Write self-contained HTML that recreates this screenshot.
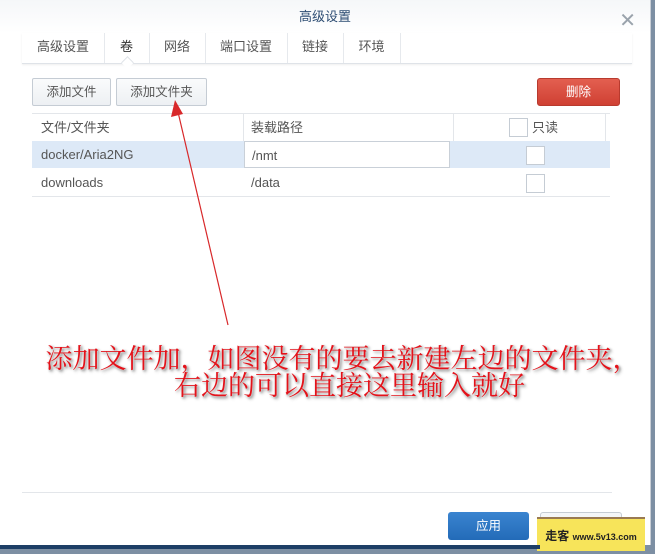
<!DOCTYPE html>
<html><head><meta charset="utf-8"><style>
body{margin:0;width:655px;height:549px;overflow:hidden;background:#7d8fa3;font-family:"Liberation Sans","Noto Sans CJK SC",sans-serif;position:relative}
.dlg{position:absolute;left:0;top:0;width:650px;height:545px;background:#fff;border-right:1px solid #c8ced6}
.title{position:absolute;left:0;top:0;width:650px;height:33px;background:linear-gradient(#f5f7f9,#fff);text-align:center;line-height:34px;font-size:13px;color:#2d4d73}
.x{position:absolute;right:14px;top:4px;font-size:20px;color:#9aa3ac;font-weight:300}
.tabs{position:absolute;left:22px;top:33px;width:610px;height:30px;border-bottom:1px solid #dfe3e8;box-shadow:0 1px 2px #eee}
.tab{position:absolute;top:0;height:30px;line-height:27px;font-size:13px;color:#555;text-align:center;border-right:1px solid #e6e9ed}
.btn{position:absolute;top:78px;height:26px;line-height:26px;border:1px solid #c5ccd4;border-radius:2px;background:linear-gradient(#fafbfc,#edf0f3);font-size:12.5px;color:#555;text-align:center}
.del{position:absolute;left:537px;top:78px;width:81px;height:26px;line-height:26px;border-radius:3px;background:linear-gradient(#e35f50,#cf4033);color:#fff;font-size:12.5px;text-align:center;border:1px solid #b83a2e}
.row{position:absolute;left:32px;width:578px;font-size:13px;color:#555}
.cb{position:absolute;width:17px;height:17px;border:1px solid #c5ccd4;background:#fff}
.ann{position:absolute;left:0;width:655px;text-align:center;font-family:"Noto Serif CJK SC",serif;font-size:27px;line-height:27px;color:#e4121a;text-shadow:0 0 2px #fff,1px 1px 2px #888,2px 2px 3px #999;white-space:nowrap}
</style></head><body>
<div class="dlg">
<div class="title">高级设置<span class="x">✕</span></div>
<div class="tabs">
<div class="tab" style="left:0;width:82px">高级设置</div>
<div class="tab" style="left:82px;width:45px;color:#333">卷</div>
<div class="tab" style="left:127px;width:56px">网络</div>
<div class="tab" style="left:183px;width:82px">端口设置</div>
<div class="tab" style="left:265px;width:56px">链接</div>
<div class="tab" style="left:321px;width:57px">环境</div>
</div>
<div style="position:absolute;left:123px;top:58px;width:8px;height:8px;background:#fff;border-left:1px solid #dfe3e8;border-top:1px solid #dfe3e8;transform:rotate(45deg)"></div>
<div class="btn" style="left:32px;width:77px">添加文件</div>
<div class="btn" style="left:116px;width:89px">添加文件夹</div>
<div class="del">删除</div>
<div class="row" style="top:113px;height:27px;line-height:27px;border-top:1px solid #e3e6ea;border-bottom:1px solid #e3e6ea">
<span style="position:absolute;left:9px">文件/文件夹</span>
<div style="position:absolute;left:211px;top:0;height:27px;border-left:1px solid #e3e6ea"></div>
<span style="position:absolute;left:219px">装载路径</span>
<div style="position:absolute;left:421px;top:0;height:27px;border-left:1px solid #e3e6ea"></div>
<div class="cb" style="left:477px;top:4px"></div><span style="position:absolute;left:500px">只读</span>
<div style="position:absolute;left:573px;top:0;height:27px;border-left:1px solid #e3e6ea"></div>
</div>
<div class="row" style="top:141px;height:27px;line-height:27px;background:#dde9f7">
<span style="position:absolute;left:9px">docker/Aria2NG</span>
<div style="position:absolute;left:212px;top:0;width:197px;height:25px;background:#fff;border:1px solid #c9d0d8;padding-left:7px">/nmt</div>
<div class="cb" style="left:494px;top:5px"></div>
</div>
<div class="row" style="top:169px;height:27px;line-height:27px;border-bottom:1px solid #e3e6ea">
<span style="position:absolute;left:9px">downloads</span>
<span style="position:absolute;left:219px">/data</span>
<div class="cb" style="left:494px;top:5px"></div>
</div>
<div style="position:absolute;left:22px;top:492px;width:590px;border-top:1px solid #e3e6ea"></div>
<div style="position:absolute;left:448px;top:512px;width:81px;height:28px;line-height:28px;border-radius:3px;background:linear-gradient(#3a84d0,#236bb8);color:#fff;font-size:12.5px;text-align:center">应用</div>
<div style="position:absolute;left:540px;top:512px;width:80px;height:28px;border:1px solid #c5ccd4;border-radius:3px;background:#f4f6f8"></div>
</div>
<svg style="position:absolute;left:0;top:0" width="655" height="549">
<line x1="228" y1="325" x2="178" y2="112" stroke="#d8282a" stroke-width="1.2"/>
<polygon points="175,100 171,117 183,114" fill="#d8282a"/>
</svg>
<div class="ann" style="top:343px;left:15px">添加文件加，如图没有的要去新建左边的文件夹，</div>
<div class="ann" style="top:370px;left:22px">右边的可以直接这里输入就好</div>
<div style="position:absolute;left:537px;top:517px;width:108px;height:32px;background:#f7e45a;border-top:2px solid #9a7a52;font-size:12px;line-height:34px;color:#222;font-weight:bold;text-align:center">走客 <span style="font-size:9px">www.5v13.com</span></div>
<div style="position:absolute;left:0;top:545px;width:540px;height:4px;background:#1d3e66"></div>
</body></html>
